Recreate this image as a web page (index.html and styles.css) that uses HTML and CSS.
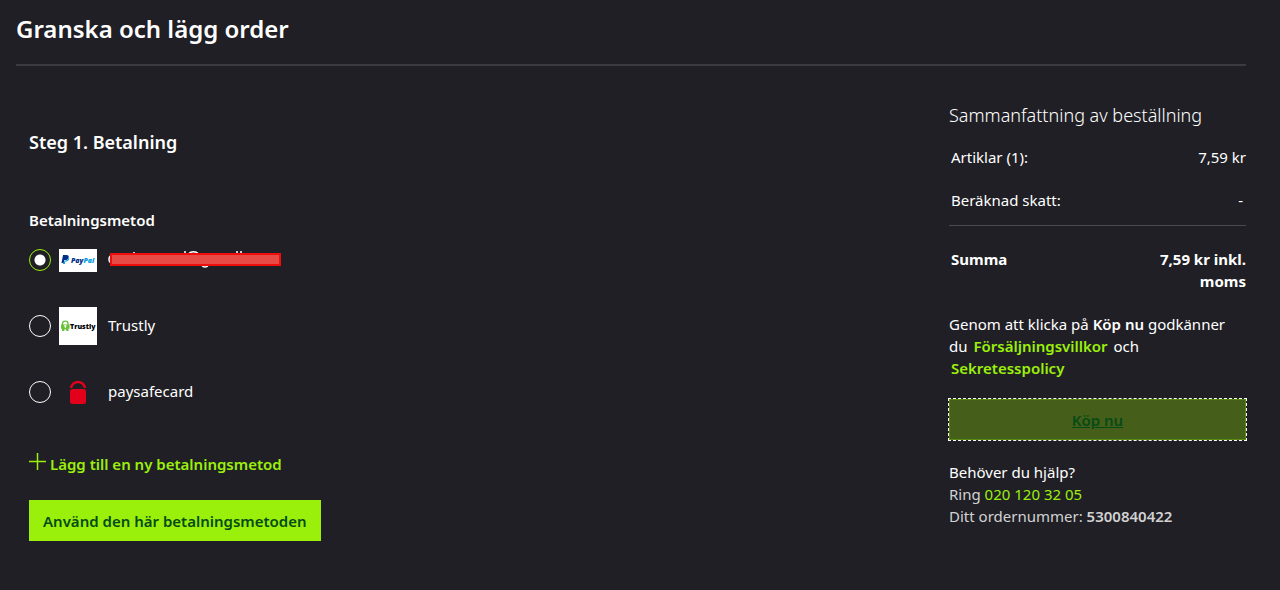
FILE: index.html
```
<!doctype html>
<html lang="sv">

<head>
    <meta charset="UTF-8">
    <meta name="viewport" content="width=device-width, initial-scale=1.0">
    <link rel="stylesheet" href="styles.css">
    <title>Granska och lägg order</title>
</head>

<body>
    <header class="page-header">
        <h1>Granska och lägg order</h1>
    </header>

    <div class="checkout">
        <main class="payment">
            <h2>Steg 1. Betalning</h2>

            <form>
                <fieldset class="methods">
                    <legend>Betalningsmetod</legend>

                    <div class="method method-paypal">
                        <input type="radio" name="method" id="paypal" checked>
                        <svg class="logo" width="38" height="23" viewBox="0 0 38 23" aria-hidden="true">
                            <rect width="38" height="23" fill="#fff" />
                            <path d="M4 6h3.400c2 0 2.700 1.100 2.200 2.800-.4 1.600-1.600 2.300-3.200 2.300H5.200L4.700 14H2.500z" fill="#003087" />
                            <path d="M9.700 8c.6.5.7 1.200.5 2-.4 1.700-1.600 2.400-3.200 2.400h-.8l-.4 2.600H4l.3-1.500h.8l.5-2.100h1c2 0 3-1 3.100-3.400z" fill="#009cde" />
                            <text class="paypal-text" x="12" y="14" fill="#003087">Pay<tspan fill="#009cde">Pal</tspan></text>
                        </svg>
                        <label for="paypal" aria-label="PayPal">
                            <svg class="account" width="174" height="22" viewBox="0 0 174 22" aria-hidden="true">
                                <path d="M5 7.500C2.400 7.200 1 8.700 1 11.200s1.400 4 4 3.700M26 4v2M77 3v3M129 3v3M133 3v3M81 6c1-3 8-3 9 0M94 17.500c1 2 5 2 6 0" fill="none" stroke="#fff" stroke-width="1.500" />
                                <rect x="3" y="6" width="169" height="11" fill="#e84b45" stroke="#f00d0d" stroke-width="2" />
                            </svg>
                        </label>
                    </div>

                    <div class="method">
                        <input type="radio" name="method" id="trustly">
                        <svg class="logo" width="38" height="38" viewBox="0 0 38 38" aria-hidden="true">
                            <rect width="38" height="38" fill="#fff" />
                            <path d="M3.500 18v-1a2.800 2.800 0 0 1 5.600 0v1" fill="none" stroke="#67c23a" stroke-width="1.300" />
                            <path d="M2 17.500h8.600v4.300H9.500V24H7.300v-1.500h-2V24H3v-2.200H2z" fill="#67c23a" />
                            <path d="M5 18.800h2.600M6.300 18.800v2.400" stroke="#fff" stroke-width="1" />
                            <text class="trustly-text" x="11" y="22">Trustly</text>
                        </svg>
                        <label for="trustly">Trustly</label>
                    </div>

                    <div class="method">
                        <input type="radio" name="method" id="paysafecard">
                        <svg class="logo" width="38" height="38" viewBox="0 0 38 38" aria-hidden="true">
                            <path d="M12 15c1-4 3.500-6 7-6s6 2 7 6" fill="none" stroke="#e2001a" stroke-width="2.400" />
                            <rect x="11" y="16" width="16" height="15" rx="2.500" fill="#e2001a" />
                        </svg>
                        <label for="paysafecard">paysafecard</label>
                    </div>
                </fieldset>

                <a class="add-method" href="#">
                    <svg width="17" height="17" viewBox="0 0 17 17" aria-hidden="true">
                        <path d="M8.500 0v17M0 8.500h17" stroke="currentColor" stroke-width="1.500" />
                    </svg>
                    Lägg till en ny betalningsmetod
                </a>

                <button type="button" class="btn btn-use">Använd den här betalningsmetoden</button>
            </form>
        </main>

        <aside class="summary">
            <h2>Sammanfattning av beställning</h2>

            <dl class="rows">
                <div>
                    <dt>Artiklar (1):</dt>
                    <dd>7,59 kr</dd>
                </div>
                <div>
                    <dt>Beräknad skatt:</dt>
                    <dd class="dash">-</dd>
                </div>
                <div class="total">
                    <dt>Summa</dt>
                    <dd>7,59 kr inkl. moms</dd>
                </div>
            </dl>

            <p class="terms">Genom att klicka på <strong>Köp nu</strong> godkänner du <a href="#">Försäljningsvillkor</a> och <a href="#">Sekretesspolicy</a></p>

            <button type="button" class="btn btn-buy">Köp nu</button>

            <div class="help">
                <p class="help-title">Behöver du hjälp?</p>
                <p>Ring <a href="tel:0201203205">020 120 32 05</a></p>
                <p>Ditt ordernummer: <strong>5300840422</strong></p>
            </div>
        </aside>
    </div>
</body>

</html>
```
FILE: styles.css
```
* {
    box-sizing: border-box;
}

body {
    margin: 0;
    padding: 0 34px 0 16px;
    background: #201f25;
    color: #fff;
    font-family: "Noto Sans", "Open Sans", sans-serif;
    font-size: 15px;
    line-height: 22px;
}

h1, h2, p, dl, dd {
    margin: 0;
}

strong {
    font-weight: 600;
}

a {
    color: #9bf00b;
    text-decoration: none;
}

.page-header {
    padding: 12px 0 18px;
    border-bottom: 2px solid #3c3b41;
}

h1 {
    font-size: 24px;
    font-weight: 600;
    line-height: 34px;
}

.checkout {
    display: flex;
    justify-content: space-between;
    gap: 32px;
}

/* payment */
.payment {
    padding: 64px 0 0 13px;
}

.payment h2 {
    font-size: 18px;
    font-weight: 600;
    line-height: 24px;
}

.methods {
    margin: 55px 0 0;
    padding: 0;
    border: 0;
}

.methods legend {
    padding: 0;
    font-weight: 600;
}

.method {
    display: flex;
    align-items: center;
    height: 66px;
}

.method-paypal {
    height: 58px;
    margin-bottom: 4px;
}

.method input {
    appearance: none;
    width: 22px;
    height: 22px;
    margin: 0;
    border: 1px solid #fff;
    border-radius: 50%;
}

.method input:checked {
    border-color: #9bf00b;
    background: radial-gradient(circle, #fff 5px, transparent 6px);
}

.method .logo {
    margin: 0 11px 0 8px;
}

.method label {
    padding-bottom: 2px;
}

.account {
    display: block;
}

.paypal-text {
    font: italic 800 7px "Open Sans", sans-serif;
}

.trustly-text {
    font: 800 7px "Open Sans", sans-serif;
}

.add-method {
    display: flex;
    gap: 4px;
    width: max-content;
    margin-top: 28px;
    font-weight: 600;
}

.btn {
    display: block;
    border: 0;
    color: #054b16;
    font: inherit;
    font-weight: 600;
    cursor: pointer;
}

.btn-use {
    height: 41px;
    margin-top: 25px;
    padding: 0 14px;
    background: #9bf00b;
}

/* order summary */
.summary {
    flex: 0 0 297px;
    padding-top: 35px;
}

.summary h2 {
    font-size: 18px;
    font-weight: 300;
    line-height: 28px;
    white-space: nowrap;
}

.rows {
    margin-top: 7px;
}

.rows div {
    display: flex;
    justify-content: space-between;
    padding: 10px 0 11px 2px;
}

.rows .dash {
    padding-right: 3px;
}

.rows .total {
    margin-top: 3px;
    padding: 22px 0 21px 2px;
    border-top: 1px solid #4b4a50;
    font-weight: 700;
}

.total dd {
    width: 100px;
    text-align: right;
}

.terms {
    padding-right: 12px;
}

.terms a {
    padding: 0 2px;
    font-weight: 600;
}

.btn-buy {
    width: 100%;
    height: 41px;
    margin-top: 20px;
    border: 1px solid #5b8a10;
    background: #455f1a;
    outline: 1px dashed #fff;
    text-decoration: underline;
}

.help {
    margin-top: 21px;
    color: #d2d2d3;
}

.help-title {
    color: #fff;
}
```
